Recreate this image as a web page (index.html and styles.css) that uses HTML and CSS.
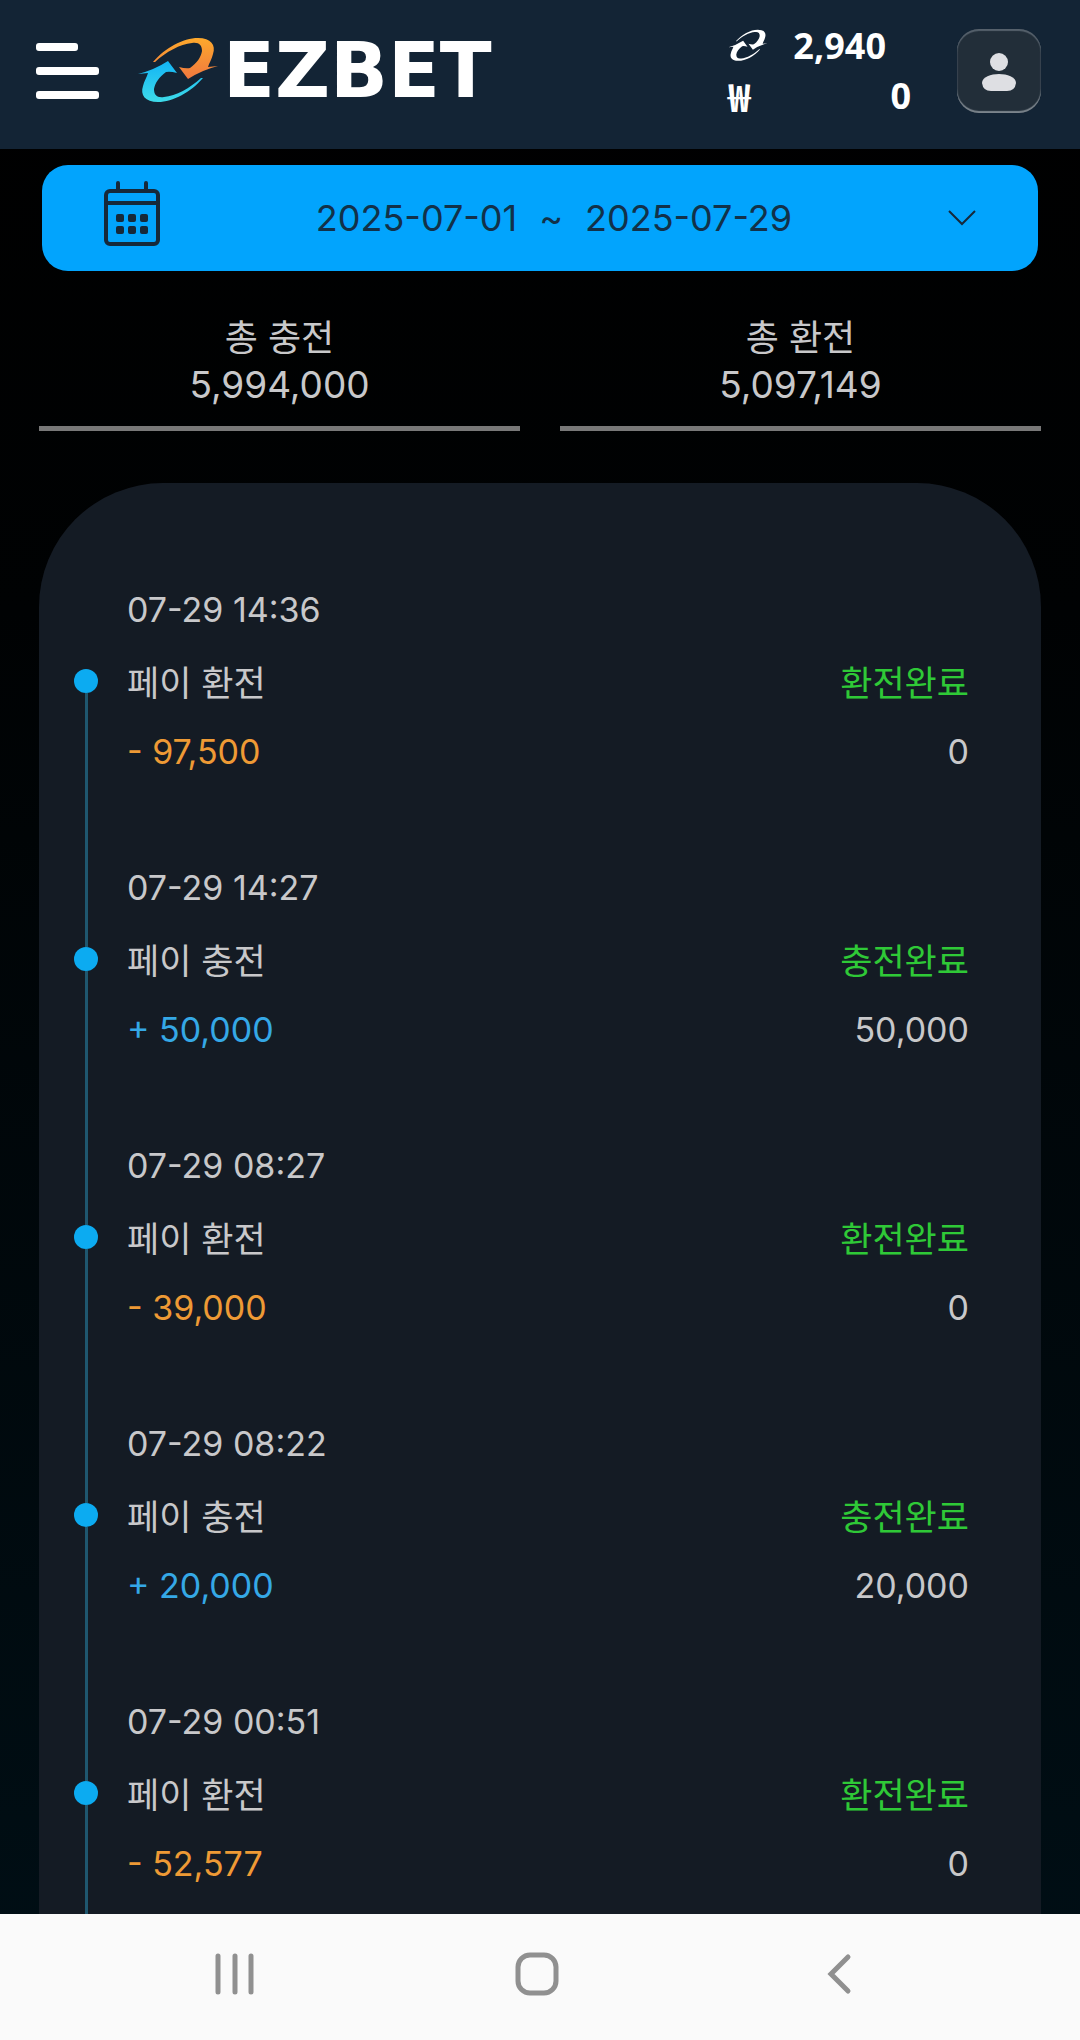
FILE: index.html
```html
<!DOCTYPE html>
<html lang="ko">
<head>
<meta charset="utf-8">
<meta name="viewport" content="width=device-width, initial-scale=1">
<title>EZBET</title>
<link rel="stylesheet" href="styles.css">
</head>
<body>
<svg class="defs" aria-hidden="true">
  <defs>
    <linearGradient id="orange" x1="0" y1="0" x2="0" y2="1"><stop offset="0" stop-color="#fda92c"/><stop offset="1" stop-color="#f0783f"/></linearGradient>
    <linearGradient id="blue" x1="0" y1="1" x2="0" y2="0"><stop offset="0" stop-color="#12b4f5"/><stop offset="1" stop-color="#3edbe9"/></linearGradient>
    <path id="arrow" d="M16 25C28 11 46 1 61 1C74 1 79 8 76 17C75 22 72 26 71 30L81 29Q65 33 51 42L42 30Q49 32 53 31C60 26 64 20 65 14C65 8 62 5 55 6C43 7 29 15 18 25Z"/>
  </defs>
</svg>

<header class="topbar">
  <button class="menu" type="button" aria-label="메뉴"><span class="bar bar-short"></span><span class="bar"></span><span class="bar"></span></button>
  <a class="brand" href="#">
    <svg class="brand-mark" viewBox="0 0 82 67" aria-hidden="true">
      <use href="#arrow" fill="url(#orange)"/>
      <use href="#arrow" fill="url(#blue)" transform="rotate(180 41 33)"/>
    </svg>
    <span class="brand-name">EZBET</span>
  </a>
  <div class="balances">
    <div class="balance">
      <svg class="point-mark" viewBox="0 0 82 67" aria-hidden="true"><use href="#arrow"/><use href="#arrow" transform="rotate(180 41 33)"/></svg>
      <span class="points">2,940</span>
    </div>
    <div class="balance"><span class="won">₩</span><span>0</span></div>
  </div>
  <button class="profile" type="button" aria-label="내 정보">
    <svg width="84" height="84" viewBox="0 0 84 84" aria-hidden="true"><circle cx="42" cy="33" r="9"/><path d="M25 54C25 48 34 45 42 45S59 48 59 54Q58 62 50 62H34Q26 62 25 54Z"/></svg>
  </button>
</header>

<main class="content">
  <button class="period" type="button">
    <svg class="calendar" width="56" height="66" viewBox="0 0 56 66" aria-hidden="true">
      <path d="M14 2V10M42 2V10M2 22H54" stroke-width="4"/><rect x="2" y="10" width="52" height="53" rx="4" stroke-width="4"/>
      <g class="days"><rect x="12" y="33" width="8" height="8" rx="2"/><rect x="24" y="33" width="8" height="8" rx="2"/><rect x="36" y="33" width="8" height="8" rx="2"/><rect x="12" y="45" width="8" height="8" rx="2"/><rect x="24" y="45" width="8" height="8" rx="2"/><rect x="36" y="45" width="8" height="8" rx="2"/></g>
    </svg>
    <span class="dates"><span>2025-07-01</span><span class="tilde">~</span><span>2025-07-29</span></span>
    <svg class="chevron" width="28" height="16" viewBox="0 0 28 16" aria-hidden="true"><path d="M1 1L14 14L27 1"/></svg>
  </button>

  <dl class="totals">
    <div class="total"><dt>총 충전</dt><dd>5,994,000</dd></div>
    <div class="total"><dt>총 환전</dt><dd>5,097,149</dd></div>
  </dl>

  <ol class="history">
    <li class="entry">
      <div class="rail"><span class="dot"></span></div>
      <div class="detail"><time>07-29 14:36</time><span class="kind">페이 환전</span><span class="status">환전완료</span><span class="minus">- 97,500</span><span>0</span></div>
    </li>
    <li class="entry">
      <div class="rail"><span class="dot"></span></div>
      <div class="detail"><time>07-29 14:27</time><span class="kind">페이 충전</span><span class="status">충전완료</span><span class="plus">+ 50,000</span><span>50,000</span></div>
    </li>
    <li class="entry">
      <div class="rail"><span class="dot"></span></div>
      <div class="detail"><time>07-29 08:27</time><span class="kind">페이 환전</span><span class="status">환전완료</span><span class="minus">- 39,000</span><span>0</span></div>
    </li>
    <li class="entry">
      <div class="rail"><span class="dot"></span></div>
      <div class="detail"><time>07-29 08:22</time><span class="kind">페이 충전</span><span class="status">충전완료</span><span class="plus">+ 20,000</span><span>20,000</span></div>
    </li>
    <li class="entry">
      <div class="rail"><span class="dot"></span></div>
      <div class="detail"><time>07-29 00:51</time><span class="kind">페이 환전</span><span class="status">환전완료</span><span class="minus">- 52,577</span><span>0</span></div>
    </li>
  </ol>
</main>

<nav class="system-nav" aria-label="시스템">
  <button type="button" aria-label="최근 앱"><svg width="44" height="44" viewBox="0 0 44 44"><path d="M5 4V40M22 4V40M38 4V40"/></svg></button>
  <button type="button" aria-label="홈"><svg width="44" height="44" viewBox="0 0 44 44"><rect x="3" y="3" width="38" height="38" rx="12"/></svg></button>
  <button type="button" aria-label="뒤로"><svg width="44" height="44" viewBox="0 0 44 44"><path d="M31 5L14 22L31 39"/></svg></button>
</nav>
</body>
</html>
```
FILE: styles.css
```css
* { box-sizing: border-box; }

body {
  margin: 0;
  height: 100vh;
  display: flex;
  flex-direction: column;
  background: linear-gradient(#000 0%, #000203 30%, #000f16 100%);
  color: #c8c8ca;
  font-family: Inter, "Noto Sans CJK KR", sans-serif;
}

button {
  margin: 0;
  padding: 0;
  border: 0;
  background: none;
  color: inherit;
  font: inherit;
}

svg { display: block; flex: none; }
.defs { position: absolute; width: 0; height: 0; }

/* Top bar */
.topbar {
  flex: none;
  display: flex;
  align-items: center;
  height: 149px;
  padding: 0 39px 8px 36px;
  background: #132435;
  color: #fff;
}

.menu {
  display: flex;
  flex-direction: column;
  gap: 16px;
  margin-right: 38px;
}
.bar { width: 63px; height: 8px; border-radius: 3px; background: #fff; }
.bar-short { width: 42px; }

.brand {
  display: flex;
  align-items: center;
  gap: 4px;
  color: #fff;
  text-decoration: none;
}
.brand-mark { width: 82px; height: 67px; }
.brand-name {
  font: bold 76px/68px "DejaVu Sans", sans-serif;
}

.balances {
  width: 183px;
  margin-left: auto;
  margin-right: 46px;
  font-family: "Noto Sans", sans-serif;
  font-size: 36px;
  font-weight: 700;
  line-height: 50px;
}
.balance {
  display: flex;
  align-items: center;
  justify-content: space-between;
}
.point-mark { width: 40px; height: 33px; fill: #fff; }
.points { margin-right: 25px; }
.won { font-size: 38px; font-family: "Noto Sans CJK KR", sans-serif; }

.profile {
  width: 84px;
  height: 84px;
  border-radius: 22px;
  background: #222e39;
  box-shadow: inset 0 2px 1px #56616c, inset 0 -2px 1px #7b848c, inset 0 0 2px #4c5863;
}
.profile svg { fill: #dedfe3; }

/* Content */
.content {
  flex: 1;
  min-height: 0;
  display: flex;
  flex-direction: column;
  padding: 16px 39px 0;
  overflow-y: auto;
  scrollbar-width: none;
}

.period {
  flex: none;
  display: flex;
  align-items: center;
  height: 106px;
  margin: 0 3px;
  padding: 0 62px;
  border-radius: 26px;
  background: #02a4fd;
  color: #123149;
  font-size: 36px;
}
.calendar { fill: none; stroke: #16293a; stroke-linecap: round; margin-bottom: 8px; }
.calendar .days { fill: #16293a; stroke: none; }
.dates { flex: 1; display: flex; justify-content: center; gap: 22px; }
.chevron { fill: none; stroke: #16293a; stroke-width: 2; }

.totals {
  flex: none;
  display: grid;
  grid-template-columns: 1fr 1fr;
  gap: 40px;
  margin: 40px 0 52px;
  text-align: center;
}
.total { padding-bottom: 17px; border-bottom: 5px solid #787878; }
.total dt,
.total dd { margin: 0; line-height: 49px; }
.total dt { font-family: "Noto Sans CJK KR", sans-serif; font-size: 36px; }
.total dd { font-size: 37px; }

/* Transaction history */
.history {
  flex: 1 0 auto;
  margin: 0;
  padding: 91px 72px 0 35px;
  border-radius: 124px 124px 0 0;
  background: #141b24;
  list-style: none;
  font-size: 34px;
  line-height: 71px;
}
.entry { display: flex; gap: 29px; }

.rail { width: 24px; display: flex; flex-direction: column; align-items: center; }
.rail::before, .rail::after { content: ""; width: 3px; background: #1f576f; }
.rail::before { height: 95px; }
.rail::after { flex: 1; }
.entry:first-child .rail::before { background: none; }
.dot { width: 24px; height: 24px; border-radius: 50%; background: #0cabf1; }

.detail {
  flex: 1;
  display: grid;
  grid-template-columns: 1fr auto;
  padding-bottom: 65px;
}
.detail time { grid-column: 1 / -1; }
.detail > :nth-child(odd) { text-align: right; }
.detail > time:first-child { text-align: left; }
.kind, .status { font-family: "Noto Sans CJK KR", sans-serif; font-size: 35px; }
.status { color: #2fc937; }
.minus { color: #ee9a35; }
.plus { color: #35a8e6; }

/* System navigation */
.system-nav {
  flex: none;
  display: grid;
  grid-template-columns: repeat(3, 1fr);
  justify-items: center;
  align-items: center;
  height: 126px;
  padding: 0 90px 6px 84px;
  background: #fafafa;
}
.system-nav svg { fill: none; stroke: #909090; stroke-width: 5; stroke-linecap: round; }
```
